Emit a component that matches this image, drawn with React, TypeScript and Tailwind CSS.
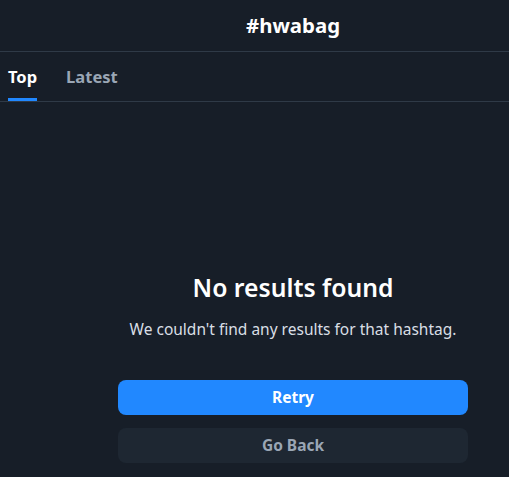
export default function App() {
  return (
    <div className="w-[509px] h-[477px] overflow-hidden bg-[#171e28] font-['Noto_Sans',sans-serif]">
      <div className="w-[586px] h-[477px] flex flex-col">
        <div className="h-[52px] flex items-center justify-center border-b border-[#2f3a47]">
          <h1 className="text-[20.4px] font-bold text-white leading-none">#hwabag</h1>
        </div>
        <div className="h-[50px] flex items-end gap-[29px] px-2 border-b border-[#2f3a47]">
          <div className="flex flex-col items-center">
            <span className="text-[16.5px] font-bold text-white leading-none pb-[13px]">Top</span>
            <div className="h-[3px] w-full bg-[#2188ff]" />
          </div>
          <div className="flex flex-col items-center">
            <span className="text-[16.5px] font-bold text-[#9aa6b5] leading-none pb-[13px]">Latest</span>
            <div className="h-[3px] w-full bg-transparent" />
          </div>
        </div>
        <div className="flex flex-col items-center pt-[174px]">
          <h2 className="text-[24.7px] font-semibold text-white leading-none">No results found</h2>
          <p className="mt-[21px] text-[15.5px] text-[#d9dee5] leading-none">We couldn't find any results for that hashtag.</p>
          <div className="mt-[43px] w-[350px] flex flex-col gap-[13px]">
            <button className="h-[35px] rounded-lg bg-[#2188ff] text-white text-[15.5px] font-bold">Retry</button>
            <button className="h-[35px] rounded-lg bg-[#1e2732] text-[#9aa6b5] text-[15.5px] font-bold">Go Back</button>
          </div>
        </div>
      </div>
    </div>
  );
}
